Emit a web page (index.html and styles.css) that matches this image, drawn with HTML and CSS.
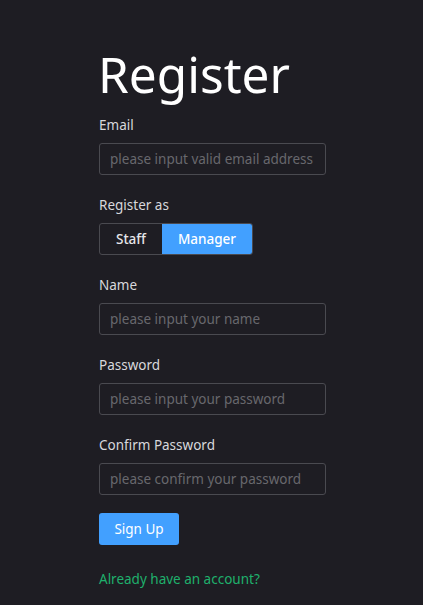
FILE: index.html
```html
<!DOCTYPE html>
<html lang="en">
<head>
<meta charset="utf-8">
<title>Register</title>
<link rel="stylesheet" href="styles.css">
</head>
<body>
<main class="page">
  <form class="form">
    <h1 class="title">Register</h1>
    <div class="field">
      <label class="label">Email</label>
      <input class="input" type="text" placeholder="please input valid email address">
    </div>
    <div class="field">
      <label class="label">Register as</label>
      <div class="segment">
        <button type="button" class="seg-btn">Staff</button>
        <button type="button" class="seg-btn active">Manager</button>
      </div>
    </div>
    <div class="field">
      <label class="label">Name</label>
      <input class="input" type="text" placeholder="please input your name">
    </div>
    <div class="field">
      <label class="label">Password</label>
      <input class="input" type="password" placeholder="please input your password">
    </div>
    <div class="field">
      <label class="label">Confirm Password</label>
      <input class="input" type="password" placeholder="please confirm your password">
    </div>
    <button type="button" class="submit">Sign Up</button>
    <a class="link" href="#">Already have an account?</a>
  </form>
</main>
</body>
</html>
```
FILE: styles.css
```css
html, body {
  margin: 0;
  padding: 0;
  background: #1e1d23;
  font-family: "Noto Sans", "Open Sans", sans-serif;
  color: #d6d6d9;
}
.page {
  display: flex;
  justify-content: center;
  min-height: 605px;
}
.form {
  width: 227px;
  margin-left: 2px;
  display: flex;
  flex-direction: column;
  align-items: flex-start;
  padding-top: 44px;
}
.title {
  margin: 0 0 11px -1px;
  font-size: 49.5px;
  font-weight: 400;
  line-height: 60px;
  color: #ffffff;
}
.field {
  display: flex;
  flex-direction: column;
  align-items: flex-start;
  width: 100%;
  margin-bottom: 20px;
}
.label {
  font-size: 13.5px;
  line-height: 20px;
  margin-bottom: 8px;
  color: #d8d8dc;
}
.input {
  box-sizing: border-box;
  width: 227px;
  height: 32px;
  border: 1px solid #4a4a50;
  border-radius: 3px;
  background: transparent;
  padding: 0 10px;
  font-family: inherit;
  font-size: 13.5px;
  color: #e0e0e0;
  outline: none;
}
.input::placeholder {
  color: #68686d;
}
.segment {
  display: flex;
  height: 32px;
  border: 1px solid #4a4a50;
  border-radius: 3px;
  overflow: hidden;
  box-sizing: border-box;
}
.seg-btn {
  border: none;
  background: transparent;
  font-family: inherit;
  font-size: 13.5px;
  font-weight: 500;
  color: #e6e6e9;
  padding: 0 16px;
}
.seg-btn.active {
  background: #42a0ff;
  color: #ffffff;
  padding: 0 16px;
}
.submit {
  margin-top: -2px;
  width: 80px;
  height: 32px;
  border: none;
  border-radius: 3px;
  background: #42a0ff;
  color: #ffffff;
  font-family: inherit;
  font-size: 13.5px;
}
.link {
  margin-top: 24px;
  font-size: 13.5px;
  line-height: 20px;
  color: #1fb06c;
  text-decoration: none;
}
```
